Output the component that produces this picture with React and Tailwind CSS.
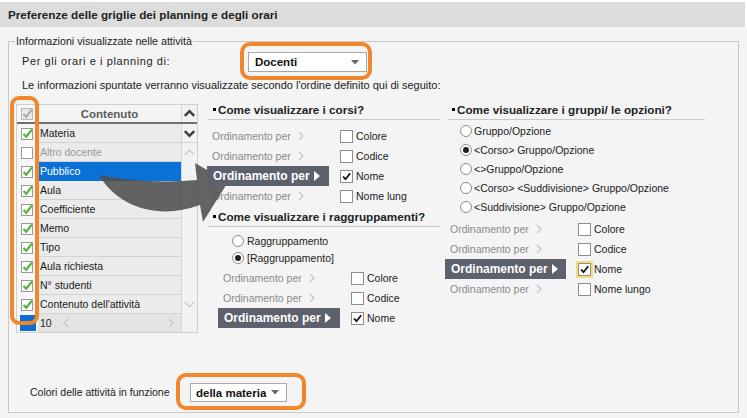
import React from "react";

const Box = ({ checked, glow }) => (
  <span
    className={
      "w-[13px] h-[13px] border border-[#8e8e8e] bg-white flex items-center justify-center shrink-0 " +
      (glow ? "shadow-[0_0_0_2px_#f6dc7a]" : "")
    }
  >
    {checked && (
      <svg width="11" height="11" viewBox="0 0 11 11">
        <path d="M2 5.5 L4.5 8.2 L9.2 2.2" fill="none" stroke="#111" strokeWidth="1.8" />
      </svg>
    )}
  </span>
);

const Radio = ({ sel }) => (
  <span className="w-[12px] h-[12px] rounded-full border border-[#8e8e8e] bg-white flex items-center justify-center shrink-0">
    {sel && <span className="w-[6px] h-[6px] rounded-full bg-[#222]" />}
  </span>
);

const GreenCheck = ({ on = true, disabled }) => (
  <svg width="15" height="15" viewBox="0 0 15 15">
    <rect
      x="1.5"
      y="2.5"
      width="11"
      height="11"
      fill={disabled ? "#e9e9e9" : "white"}
      stroke={disabled ? "#b8b8b8" : "#9a9a9a"}
    />
    {on && (
      <path
        d="M3.5 8 L6.2 10.8 L12 3.5"
        fill="none"
        stroke={disabled ? "#b0b0b0" : "#58b443"}
        strokeWidth="2.2"
      />
    )}
  </svg>
);

const Chev = ({ dir, dark }) => {
  const pts =
    dir === "up" ? "3,9 8,4 13,9" : dir === "down" ? "3,4 8,9 13,4" : dir === "left" ? "6,1 2,5 6,9" : "2,1 6,5 2,9";
  const small = dir === "left" || dir === "right";
  return (
    <svg width={small ? 8 : 16} height={small ? 10 : 13} viewBox={small ? "0 0 8 10" : "0 0 16 13"}>
      <polyline
        points={pts}
        fill="none"
        stroke={dark ? "#3c3c3c" : "#c4c4c4"}
        strokeWidth={dark ? 2.6 : 1.2}
      />
    </svg>
  );
};

const Bullet = () => <span className="inline-block w-[3px] h-[3px] bg-black mr-[2px] mb-[1px] shrink-0" />;

const OrdRow = ({ label, checked, hi, boxW, gap, glow }) => (
  <div className="flex items-center h-[20px] whitespace-nowrap">
    {hi ? (
      <div
        className="relative z-20 h-[20px] bg-[#5d616d] text-white font-bold text-[12px] flex items-center pl-[6px]"
        style={{ width: boxW }}
      >
        Ordinamento per
        <svg width="6" height="10" viewBox="0 0 6 10" className="ml-[4px]">
          <polygon points="0,0 6,5 0,10" fill="#fff" />
        </svg>
      </div>
    ) : (
      <div className="h-[20px] text-[#8a8a8a] flex items-center pl-[5px]" style={{ width: boxW }}>
        Ordinamento per
        <span className="ml-[6px] flex">
          <Chev dir="right" />
        </span>
      </div>
    )}
    <span style={{ marginLeft: gap }} className="flex">
      <Box checked={checked} glow={glow} />
    </span>
    <span className="ml-[3px] text-[#222]">{label}</span>
  </div>
);

const Dropdown = ({ text, w, h, pl, ring }) => (
  <div className="border-[4px] border-[#f0872e] rounded-[10px]" style={{ padding: ring }}>
    <div
      className="bg-white border border-[#a8a8a8] flex items-center justify-between font-bold text-[11.5px] text-[#111] pr-[7px] whitespace-nowrap"
      style={{ width: w, height: h, paddingLeft: pl }}
    >
      <span>{text}</span>
      <svg width="8" height="5" viewBox="0 0 8 5">
        <polygon points="0,0 8,0 4,4.5" fill="#666" />
      </svg>
    </div>
  </div>
);

const rows = [
  { t: "Materia", c: true },
  { t: "Altro docente", c: false, dim: true },
  { t: "Pubblico", c: true, sel: true },
  { t: "Aula", c: true },
  { t: "Coefficiente", c: true },
  { t: "Memo", c: true },
  { t: "Tipo", c: true },
  { t: "Aula richiesta", c: true },
  { t: "N° studenti", c: true },
  { t: "Contenuto dell'attività", c: true },
];

export default function App() {
  return (
    <div className="w-[747px] h-[418px] bg-[#f4f4f4] relative overflow-hidden font-['Liberation_Sans',Arial,sans-serif] text-[10.5px] leading-[14px] text-[#222]">
      <div className="pt-[2px] pr-[2px] bg-white">
        <div className="h-[25px] bg-[#dcdcdc] flex items-center pl-[8px] text-[11.7px] font-bold text-[#222]">
          Preferenze delle griglie dei planning e degli orari
        </div>
      </div>

      <div className="mt-[14px] ml-[8px] w-[731px] h-[372px] border border-[#c9c9c9] relative flex flex-col">
        <span className="absolute top-[-8px] left-[6px] px-[1px] bg-[#f4f4f4] leading-[14px] text-[10.7px]">
          Informazioni visualizzate nelle attività
        </span>

        <div className="flex items-center pl-[13px] h-[38px]">
          <span className="w-[218px] text-[11px] tracking-[0.6px] whitespace-nowrap">Per gli orari e i planning di:</span>
          <Dropdown text="Docenti" w={119} h={20} pl={6} ring="6px 1px 4px 4px" />
        </div>

        <div className="pl-[13px] mt-[-2px] leading-[14px] text-[11px] whitespace-nowrap">
          Le informazioni spuntate verranno visualizzate secondo l'ordine definito qui di seguito:
        </div>

        <div className="flex items-start mt-[10px]">
          {/* table */}
          <div className="ml-[7px] mt-[2px] w-[182px] relative">
            <div className="border border-[#cfcfcf] flex flex-col bg-[#f7f7f7]">
              <div className="flex h-[19px] border-b-2 border-[#6f6f6f]">
                <div className="w-[21px] flex items-center justify-center">
                  <GreenCheck disabled />
                </div>
                <div className="w-[143px] flex items-center justify-center font-bold text-[11.5px] text-[#5a5a5a] bg-[#f4f4f4]">
                  Contenuto
                </div>
                <div className="w-[16px] border-l border-[#d6d6d6] bg-[#f2f2f2] flex items-center justify-center">
                  <Chev dir="up" dark />
                </div>
              </div>
              {rows.map((r, i) => (
                <div key={i} className="flex h-[19px]">
                  <div className="w-[21px] flex items-center justify-center">
                    <GreenCheck on={r.c} />
                  </div>
                  <div
                    className={
                      "w-[143px] flex items-center pl-[2px] border-b whitespace-nowrap " +
                      (r.sel
                        ? "bg-[#0a72d6] text-white border-[#0a72d6]"
                        : "bg-[#ebebeb] border-[#d3d3d3] " + (r.dim ? "text-[#9a9a9a]" : "text-[#1a1a1a]"))
                    }
                  >
                    {r.t}
                  </div>
                  <div
                    className={
                      "w-[16px] border-l border-[#d6d6d6] bg-[#f2f2f2] flex items-center justify-center " +
                      (i === 0 ? "border-b border-b-[#d3d3d3]" : "")
                    }
                  >
                    {i === 0 && <Chev dir="down" dark />}
                    {i === 1 && <Chev dir="up" />}
                    {i === 9 && <Chev dir="down" />}
                  </div>
                </div>
              ))}
              <div className="flex h-[18px]">
                <div className="w-[21px] flex items-center justify-center">
                  <span className="w-[16px] h-[16px] bg-[#0a6fd0]" />
                </div>
                <div className="w-[143px] flex items-center pl-[2px] bg-[#e4e4e4]">
                  <span>10</span>
                  <span className="ml-[10px] flex">
                    <Chev dir="left" />
                  </span>
                  <span className="ml-auto mr-[6px] flex">
                    <Chev dir="right" />
                  </span>
                </div>
                <div className="w-[16px] border-l border-[#d6d6d6] bg-[#f2f2f2]" />
              </div>
            </div>
            <div className="absolute left-[-6px] top-[-8px] w-[29px] h-[229px] border-[4px] border-[#f0872e] rounded-[9px] z-30" />
          </div>

          {/* middle column */}
          <div className="ml-[9px] w-[233px] flex flex-col">
            <div className="h-[18px] pb-[2px] ml-[1px] border-b border-[#c8c8c8] flex items-center pl-[5px] font-bold text-[11.7px] leading-[16px] whitespace-nowrap">
              <Bullet />
              Come visualizzare i corsi?
            </div>
            <div className="mt-[6px]">
              <OrdRow label="Colore" boxW={122} gap={11} />
              <OrdRow label="Codice" boxW={122} gap={11} />
              <OrdRow label="Nome" checked hi boxW={122} gap={11} />
              <OrdRow label="Nome lung" boxW={122} gap={11} />
            </div>
            <div className="mt-[3px] h-[18px] pb-[2px] ml-[1px] border-b border-[#c8c8c8] flex items-center pl-[5px] font-bold text-[11.7px] leading-[16px] whitespace-nowrap">
              <Bullet />
              Come visualizzare i raggruppamenti?
            </div>
            <div className="mt-[5px] pl-[25px]">
              <div className="flex items-center h-[17px]">
                <Radio />
                <span className="ml-[3px]">Raggruppamento</span>
              </div>
              <div className="flex items-center h-[17px]">
                <Radio sel />
                <span className="ml-[3px]">[Raggruppamento]</span>
              </div>
            </div>
            <div className="mt-[2px] pl-[11px]">
              <OrdRow label="Colore" boxW={122} gap={11} />
              <OrdRow label="Codice" boxW={122} gap={11} />
              <OrdRow label="Nome" checked hi boxW={122} gap={11} />
            </div>
          </div>

          {/* right column */}
          <div className="ml-[5px] w-[262px] flex flex-col">
            <div className="h-[18px] pb-[2px] ml-[3px] w-[257px] border-b border-[#c8c8c8] flex items-center pl-[4px] font-bold text-[11.7px] leading-[16px] whitespace-nowrap">
              <Bullet />
              Come visualizzare i gruppi/ le opzioni?
            </div>
            <div className="mt-[1px] pl-[15px]">
              {[
                ["Gruppo/Opzione", false],
                ["<Corso> Gruppo/Opzione", true],
                ["<>Gruppo/Opzione", false],
                ["<Corso> <Suddivisione> Gruppo/Opzione", false],
                ["<Suddivisione> Gruppo/Opzione", false],
              ].map(([t, s], i) => (
                <div key={i} className="flex items-center h-[19px] whitespace-nowrap">
                  <Radio sel={s} />
                  <span className="ml-[2px]">{t}</span>
                </div>
              ))}
            </div>
            <div className="mt-[3px]">
              <OrdRow label="Colore" boxW={121} gap={12} />
              <OrdRow label="Codice" boxW={121} gap={12} />
              <OrdRow label="Nome" checked hi glow boxW={121} gap={12} />
              <OrdRow label="Nome lungo" boxW={121} gap={12} />
            </div>
          </div>
        </div>

        <div className="mt-auto mb-[2px] pl-[21px] flex items-center">
          <span className="w-[146px] whitespace-nowrap">Colori delle attività in funzione</span>
          <Dropdown text="della materia" w={97} h={19} pl={5} ring="6px 15px 4px 10px" />
        </div>
      </div>

      <svg
        className="absolute left-0 top-0 pointer-events-none z-10"
        width="747"
        height="418"
        viewBox="0 0 747 418"
      >
        <path
          d="M99,175 C 128,181 166,183 197,180 L 195,163 L 228,182 L 203,222 L 200,205 C 160,220 118,208 99,175 Z"
          fill="#4f4f4f"
          fillOpacity="0.88"
        />
      </svg>
    </div>
  );
}
